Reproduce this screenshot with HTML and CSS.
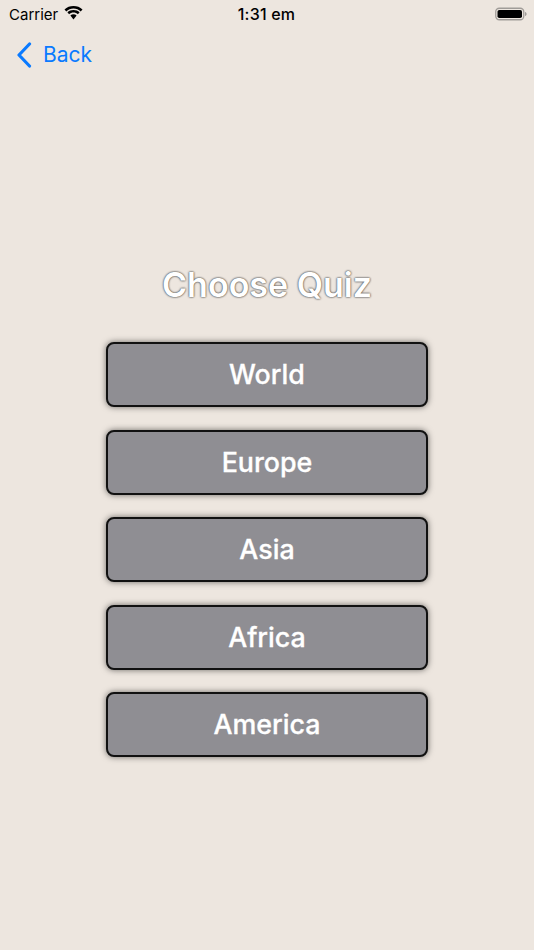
FILE: index.html
```html
<!DOCTYPE html>
<html lang="en">
<head>
<meta charset="utf-8">
<title>Choose Quiz</title>
<link rel="stylesheet" href="styles.css">
</head>
<body>
<div class="screen">
  <header class="status">
    <div class="status-left">
      <span>Carrier</span>
      <svg class="wifi" width="19" height="14" viewBox="0 0 19 14"><path d="M9.500 2.500c2.800 0 5.300 1.100 7.200 2.900l1.800-2C16.100 1.100 13 0 9.500 0S2.900 1.100.5 3.400l1.800 2C4.200 3.600 6.700 2.500 9.500 2.500z"/><path d="M9.500 6.600c1.700 0 3.200.6 4.400 1.700l1.700-2C14 4.900 11.900 4.100 9.500 4.100S5 4.900 3.400 6.300l1.700 2C6.300 7.200 7.800 6.600 9.500 6.600z"/><path d="M9.500 8.300c-1.200 0-2.200.4-3.100 1.200l3.100 3.900 3.100-3.900c-.9-.8-1.900-1.200-3.100-1.200z"/></svg>
    </div>
    <div class="time">1:31 em</div>
    <div class="status-right">
      <svg class="battery" width="33" height="14" viewBox="0 0 33 14"><rect x=".75" y="1.250" width="28" height="11.500" rx="3.500" fill="none" stroke="#a09c98" stroke-width="1.300"/><rect x="2.500" y="3" width="24.500" height="8" rx="1.800" fill="#000"/><path d="M30 5v4c1-.3 1.600-1.100 1.600-2S31 5.300 30 5z" fill="#a09c98"/></svg>
    </div>
  </header>
  <nav class="nav">
    <a class="back">
      <svg class="chevron" width="16" height="26" viewBox="0 0 16 26"><path d="M13.500 2 3 13l10.500 11" fill="none" stroke="#0a7aff" stroke-width="3.200" stroke-linecap="round" stroke-linejoin="round"/></svg>
      <span>Back</span>
    </a>
  </nav>
  <main class="content">
    <h1 class="title">Choose Quiz</h1>
    <div class="list">
      <button class="quiz">World</button>
      <button class="quiz">Europe</button>
      <button class="quiz">Asia</button>
      <button class="quiz">Africa</button>
      <button class="quiz">America</button>
    </div>
  </main>
</div>
</body>
</html>
```
FILE: styles.css
```css
* { box-sizing: border-box; }
html, body { margin: 0; padding: 0; }
body {
  width: 534px;
  height: 950px;
  overflow: hidden;
  background: #ede6df;
  font-family: Inter, "Liberation Sans", sans-serif;
}
.screen { display: flex; flex-direction: column; height: 950px; }
.status {
  height: 28px;
  display: grid;
  grid-template-columns: 1fr auto 1fr;
  align-items: center;
  padding: 0 6px 0 9px;
  font-size: 15px;
  color: #000;
}
.status-left { display: flex; align-items: center; gap: 6px; }
.wifi { display: block; margin-top: -2px; }
.time { font-weight: 500; font-size: 16px; letter-spacing: .2px; margin-right: 4px; }
.status-right { display: flex; justify-content: flex-end; }
.battery { display: block; }
.nav { height: 54px; display: flex; align-items: center; padding-left: 16px; }
.back { display: flex; align-items: center; gap: 11px; color: #0a7aff; font-size: 21px; margin-top: -1px; }
.chevron { display: block; margin-top: 1px; }
.content { display: flex; flex-direction: column; align-items: center; padding-top: 181px; }
.title {
  margin: 0;
  height: 44px;
  line-height: 44px;
  font-size: 34px;
  font-weight: 600;
  color: #fff;
  text-shadow: 0 0 2px #444, 0 0 2px #666;
}
.list { display: flex; flex-direction: column; gap: 22.6px; margin-top: 35px; }
.quiz {
  width: 322px;
  height: 65px;
  padding: 0 0 1px;
  background: #8f8e93;
  border: 2px solid #111;
  border-radius: 8px;
  box-shadow: 0 0 6px rgba(0,0,0,.55);
  color: #fff;
  font-family: inherit;
  font-size: 26.8px;
  font-weight: 500;
  -webkit-text-stroke: .3px #fff;
}
```
